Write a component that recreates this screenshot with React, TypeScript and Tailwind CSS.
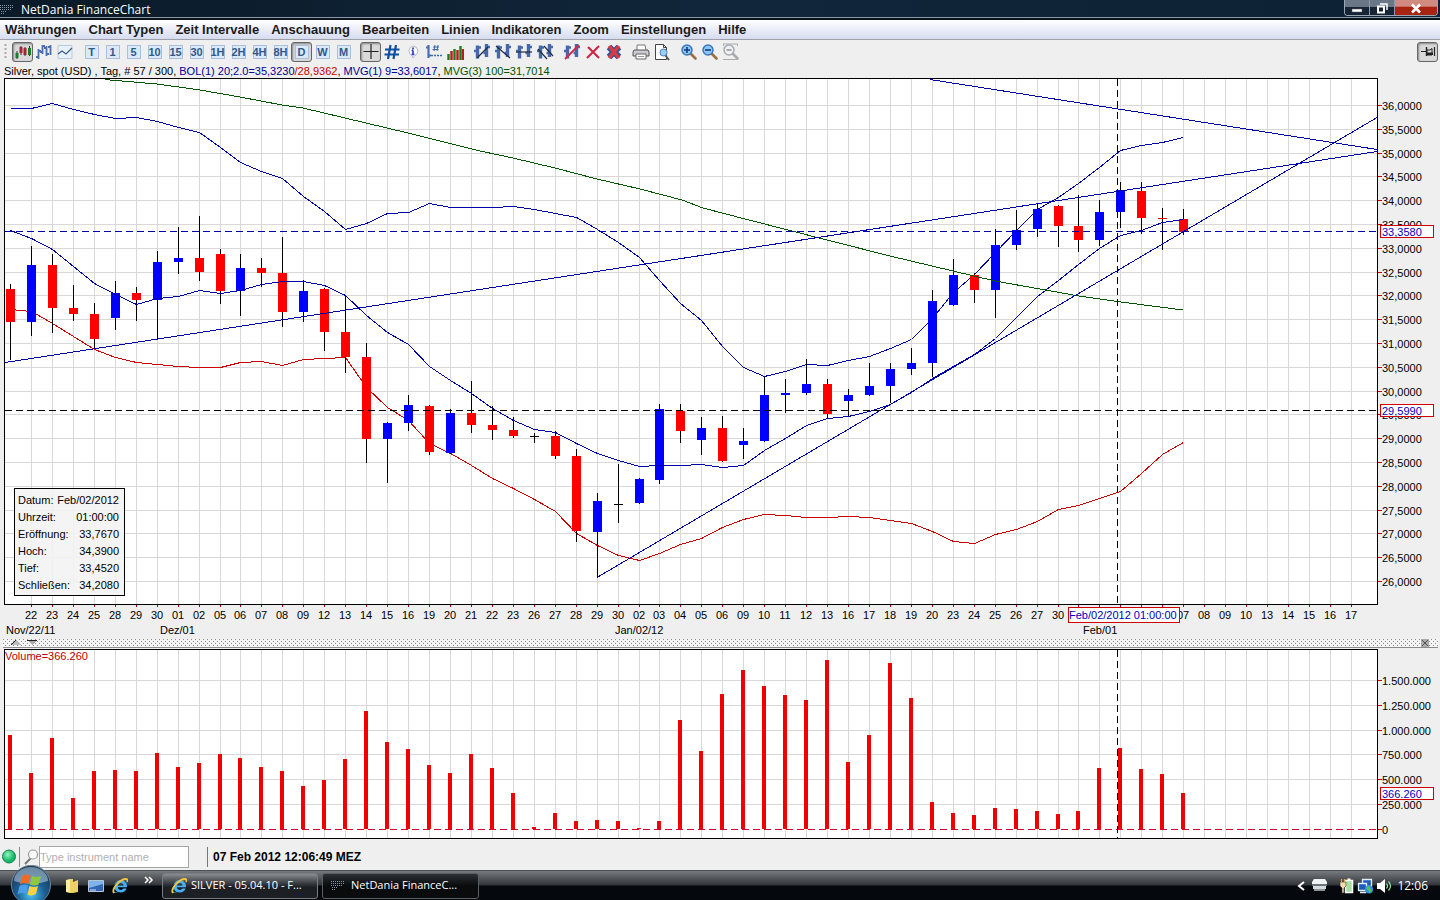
import { useLayoutEffect, useRef, useState, type ReactNode } from "react";
import clsx from "clsx";
import { FaInternetExplorer } from "react-icons/fa";

const menus = [
  "Währungen",
  "Chart Typen",
  "Zeit Intervalle",
  "Anschauung",
  "Bearbeiten",
  "Linien",
  "Indikatoren",
  "Zoom",
  "Einstellungen",
  "Hilfe",
];

const intervals = ["T", "1", "5", "10", "15", "30", "1H", "2H", "4H", "8H", "D", "W", "M"];

const days =
  "22 23 24 25 28 29 30 01 02 05 06 07 08 09 12 13 14 15 16 19 20 21 22 23 26 27 28 29 30 02 03 04 05 06 09 10 11 12 13 16 17 18 19 20 23 24 25 26 27 30 31 01 02 03 06 07 08 09 10 13 14 15 16 17".split(
    " "
  );

const months = [
  { text: "Nov/22/11", x: 6 },
  { text: "Dez/01", x: 160 },
  { text: "Jan/02/12", x: 615 },
  { text: "Feb/01", x: 1083 },
];

// high, body top, body bottom, low, direction
type Candle = [number, number, number, number, "up" | "down" | "flat"];

const candles: Candle[] = [
  [284, 289, 322, 360, "down"],
  [246, 265, 322, 336, "up"],
  [254, 265, 308, 333, "down"],
  [285, 308, 314, 321, "down"],
  [303, 314, 339, 348, "down"],
  [281, 293, 318, 330, "up"],
  [287, 293, 300, 321, "down"],
  [251, 262, 300, 339, "up"],
  [227, 258, 262, 274, "up"],
  [216, 258, 272, 281, "down"],
  [249, 254, 291, 304, "down"],
  [254, 268, 291, 316, "up"],
  [258, 268, 273, 287, "down"],
  [237, 273, 312, 327, "down"],
  [280, 291, 312, 322, "up"],
  [288, 289, 332, 351, "down"],
  [296, 332, 357, 373, "down"],
  [343, 357, 439, 463, "down"],
  [422, 423, 439, 483, "up"],
  [395, 405, 423, 431, "up"],
  [405, 406, 452, 455, "down"],
  [409, 413, 453, 454, "up"],
  [381, 413, 425, 433, "down"],
  [406, 425, 430, 440, "down"],
  [417, 430, 436, 438, "down"],
  [433, 436, 437, 443, "flat"],
  [431, 436, 456, 459, "down"],
  [449, 456, 531, 542, "down"],
  [493, 501, 532, 577, "up"],
  [464, 504, 505, 523, "flat"],
  [478, 479, 503, 504, "up"],
  [404, 409, 480, 484, "up"],
  [404, 411, 431, 443, "down"],
  [417, 428, 440, 455, "up"],
  [416, 428, 461, 462, "down"],
  [428, 441, 445, 459, "up"],
  [377, 395, 441, 442, "up"],
  [379, 393, 395, 413, "up"],
  [359, 384, 393, 395, "up"],
  [379, 384, 414, 419, "down"],
  [389, 395, 401, 416, "up"],
  [363, 386, 395, 396, "up"],
  [363, 369, 386, 403, "up"],
  [348, 363, 369, 375, "up"],
  [290, 301, 363, 377, "up"],
  [259, 275, 305, 306, "up"],
  [273, 275, 290, 303, "down"],
  [229, 245, 290, 318, "up"],
  [210, 230, 245, 250, "up"],
  [203, 209, 229, 237, "up"],
  [205, 206, 226, 247, "down"],
  [195, 226, 240, 252, "down"],
  [200, 212, 240, 246, "up"],
  [182, 190, 212, 228, "up"],
  [182, 191, 218, 234, "down"],
  [208, 218, 219, 250, "down"],
  [209, 219, 232, 235, "down"],
];

const upperBand = [
  108, 108, 103, 109, 114, 118, 117, 121, 127, 132, 147, 162, 171, 178, 196, 211, 229, 223, 213, 212,
  203, 207, 207, 207, 206, 209, 213, 217, 229, 242, 257, 280, 303, 320, 346, 367, 376, 371, 364, 365,
  360, 356, 348, 339, 318, 292, 274, 252, 230, 209, 197, 183, 167, 150, 145, 142, 137,
];

const average = [
  230, 238, 249, 266, 283, 294, 304, 298, 296, 290, 293, 290, 284, 281, 281, 285, 295, 315, 332, 344,
  366, 380, 393, 408, 420, 429, 432, 443, 453, 460, 466, 465, 465, 464, 467, 465, 450, 438, 425, 418,
  416, 411, 404, 392, 378, 366, 354, 338, 317, 296, 280, 264, 248, 235, 230, 222, 219,
];

const lowerBand = [
  309, 311, 323, 336, 349, 357, 362, 364, 366, 367, 367, 362, 361, 365, 359, 358, 357, 387, 407, 420,
  443, 453, 465, 478, 488, 499, 511, 533, 545, 555, 560, 553, 544, 538, 527, 519, 514, 515, 517, 517,
  516, 517, 520, 523, 531, 541, 543, 534, 529, 521, 509, 505, 498, 491, 473, 454, 442,
];

const longAverage = [
  [100, 78], [110, 80], [157, 84], [200, 90], [240, 97], [282, 105], [303, 108], [345, 118], [408, 133],
  [480, 151], [513, 158], [555, 168], [597, 179], [640, 189], [682, 200], [703, 208], [745, 219],
  [788, 230], [827, 240], [890, 256], [953, 271], [995, 281], [1040, 289], [1079, 296], [1121, 302],
  [1183, 310],
];

const trendLines = [
  [5, 362, 1377, 151],
  [930, 79, 1377, 149],
  [597, 577, 1377, 117],
];

const volumes = [
  735, 773, 738, 798, 771, 770, 771, 753, 767, 763, 754, 758, 767, 771, 786, 780, 759, 711, 742, 749,
  765, 773, 754, 768, 793, 827, 813, 821, 820, 821, 828, 821, 720, 751, 694, 670, 686, 695, 700, 660,
  762, 735, 663, 698, 802, 813, 815, 808, 809, 811, 814, 811, 768, 748, 769, 774, 793,
];

const volumeLabels = ["1.500.000", "1.250.000", "1.000.000", "750.000", "500.000", "250.000", "0"];

const quote = [
  ["Datum:", "Feb/02/2012"],
  ["Uhrzeit:", "01:00:00"],
  ["Eröffnung:", "33,7670"],
  ["Hoch:", "34,3900"],
  ["Tief:", "33,4520"],
  ["Schließen:", "34,2080"],
];

const bodyColor = { up: "#0000ff", down: "#ff0000", flat: "#000000" };

function useSize(width: number, height: number) {
  const ref = useRef<HTMLDivElement>(null);
  const [size, setSize] = useState({ width, height });
  useLayoutEffect(() => {
    const el = ref.current;
    if (!el) return;
    const update = () => setSize({ width: el.clientWidth, height: el.clientHeight });
    update();
    const observer = new ResizeObserver(update);
    observer.observe(el);
    return () => observer.disconnect();
  }, []);
  return { ref, ...size };
}

const makeX = (width: number) => (x: number) => Math.round(4 + ((x - 4) * (width - 67)) / 1373);
const column = (i: number) => 10 + i * 20.95;

// 1px dashed rule built from 7px runs with 4px gaps
function dashes(from: number, to: number, at: number, vertical = false) {
  let d = "";
  for (let p = from; p < to; p += 11) {
    const run = Math.min(7, to - p);
    d += vertical ? `M${at} ${p}h1v${run}h-1z` : `M${p} ${at}h${run}v1h-${run}z`;
  }
  return d;
}

function ValueTag({ x, y, width, text }: { x: number; y: number; width: number; text: string }) {
  return (
    <g>
      <rect x={x + 0.5} y={y - 6.5} width={width} height={12} fill="#fff" stroke="#d00000" />
      <text x={x + 2} y={y + 4} fill="#0000c0">
        {text}
      </text>
    </g>
  );
}

function PriceChart() {
  const { ref, width, height } = useSize(1440, 560);
  const px = makeX(width);
  const bottom = height - 34;
  const py = (y: number) => Math.round(((y - 78) * bottom) / 526);
  const right = px(1377);
  const tagX = px(1068);
  // dates fully behind the cursor tag are left out
  const hidden = (x: number) => x > tagX + 6 && x < tagX + 106;
  const band = (values: number[]) => values.map((v, i) => `${px(column(i)) + 0.5},${py(v) + 0.5}`).join(" ");

  return (
    <div ref={ref} className="relative min-h-0 flex-1 overflow-hidden">
      <svg
        width={width}
        height={height}
        className="absolute inset-0 font-['Liberation_Sans',Arial,sans-serif] text-[11px]"
        shapeRendering="crispEdges"
        fill="none"
        role="img"
        aria-label="Silver, spot (USD)"
      >
        <clipPath id="plot">
          <rect x="5" y="1" width={Math.max(0, right - 5)} height={Math.max(0, bottom - 1)} />
        </clipPath>
        <rect x="4.5" y="0.5" width={Math.max(0, right - 4)} height={Math.max(0, bottom)} fill="#fff" stroke="#000" />
        <g clipPath="url(#plot)">
          {days.map((_, i) => (
            <rect key={i} x={px(column(i + 1))} y="0" width="1" height={bottom} fill="#d8d8d8" />
          ))}
          {Array.from({ length: 21 }, (_, i) => (
            <rect key={i} x="5" y={py(105 + i * 23.8)} width={right} height="1" fill="#d8d8d8" />
          ))}
          <polyline points={band(upperBand)} stroke="#0000a8" />
          <polyline points={band(lowerBand)} stroke="#cc0000" />
          {candles.map(([high, top, base, low, dir], i) => {
            const x = px(column(i));
            return (
              <g key={i} fill={bodyColor[dir]}>
                <rect x={x} y={py(high)} width="1" height={py(low) - py(high)} fill="#000" />
                <rect x={x - 4} y={py(top)} width="9" height={Math.max(1, py(base) - py(top))} />
              </g>
            );
          })}
          <polyline points={band(average)} stroke="#0000a8" />
          <polyline points={longAverage.map(([x, y]) => `${px(x)},${py(y)}`).join(" ")} stroke="#005500" />
          {trendLines.map(([x1, y1, x2, y2]) => (
            <line key={y1} x1={px(x1)} y1={py(y1) + 0.5} x2={px(x2)} y2={py(y2) + 0.5} stroke="#0000a8" />
          ))}
          <path d={dashes(5, right, py(231))} fill="#0000a8" />
          <path d={dashes(5, right, py(410))} fill="#000" />
          <path d={dashes(1, bottom, px(1117), true)} fill="#000" />
        </g>
        {Array.from({ length: 21 }, (_, i) => (
          <g key={i}>
            <rect x={right + 1} y={py(105 + i * 23.8)} width="4" height="1" fill="#c00000" />
            <text x={right + 5} y={py(105 + i * 23.8) + 5} fill="#000">
              {(36 - i / 2).toFixed(4).replace(".", ",")}
            </text>
          </g>
        ))}
        {days.map((day, i) => (
          <g key={i}>
            <rect x={px(column(i + 1))} y={bottom + 1} width="1" height="2" fill="#a00020" />
            {!hidden(px(column(i + 1))) && (
              <text x={px(column(i + 1))} y={bottom + 15} fill="#000" textAnchor="middle">
                {day}
              </text>
            )}
          </g>
        ))}
        {months.map((m) => (
          <text key={m.text} x={px(m.x)} y={bottom + 30} fill="#000">
            {m.text}
          </text>
        ))}
        <ValueTag x={right + 3} y={py(232)} width={53} text="33,3580" />
        <ValueTag x={right + 3} y={py(411)} width={53} text="29,5990" />
        <rect x={tagX + 0.5} y={bottom + 3.5} width="111" height="15" fill="#fff" stroke="#d00000" />
        <text x={tagX + 1} y={bottom + 15} fill="#0000c0">
          Feb/02/2012 01:00:00
        </text>
      </svg>
      <dl className="absolute bottom-[42px] left-[14px] w-[111px] border border-black bg-[#f3f3f3]/90 pt-[3px] pr-[5px] pb-px pl-[3px] text-[11px] leading-[17px]">
        {quote.map(([label, value]) => (
          <div key={label} className="flex justify-between">
            <dt>{label}</dt>
            <dd>{value}</dd>
          </div>
        ))}
      </dl>
    </div>
  );
}

function VolumeChart() {
  const { ref, width, height } = useSize(1440, 191);
  const px = makeX(width);
  const py = (y: number) => Math.round(y - 649);
  const right = px(1377);
  return (
    <div ref={ref} className="relative h-[191px] shrink-0 overflow-hidden">
      <svg
        width={width}
        height={height}
        className="absolute inset-0 font-['Liberation_Sans',Arial,sans-serif] text-[11px]"
        shapeRendering="crispEdges"
        role="img"
        aria-label="Volume"
      >
        <rect x="4.5" y="0.5" width={Math.max(0, right - 4)} height="189" fill="#fff" stroke="#000" />
        {days.map((_, i) => (
          <rect key={i} x={px(column(i + 1))} y="1" width="1" height="188" fill="#d8d8d8" />
        ))}
        {volumeLabels.map((label, i) => (
          <g key={label}>
            {i < 6 && <rect x="5" y={py(680 + i * 24.8)} width={Math.max(0, right - 5)} height="1" fill="#d8d8d8" />}
            <rect x={right + 1} y={py(680 + i * 24.8)} width="4" height="1" fill="#c00000" />
            <text x={right + 5} y={py(680 + i * 24.8) + 5}>
              {label}
            </text>
          </g>
        ))}
        {volumes.map((v, i) => (
          <rect key={i} x={px(column(i)) - 2} y={py(v)} width="4" height={829 - v} fill="#f00000" />
        ))}
        <path d={dashes(5, right, 180)} fill="#d00030" />
        <path d={dashes(1, 189, px(1117), true)} fill="#000" />
        <text x="5" y="11" fill="#c00000">
          Volume=366.260
        </text>
        <ValueTag x={right + 3} y={py(794)} width={53} text="366.260" />
      </svg>
    </div>
  );
}

function Tool({ label, pressed, children }: { label: string; pressed?: boolean; children: ReactNode }) {
  return (
    <button
      type="button"
      aria-label={label}
      aria-pressed={pressed}
      className={clsx(
        "flex h-5 w-[21px] items-center justify-center rounded-[3px]",
        pressed && "border border-[#666] bg-[#d9d9d9] shadow-[inset_1px_1px_2px_#888]"
      )}
    >
      {children}
    </button>
  );
}

function Icon({ children }: { children: ReactNode }) {
  return (
    <svg width="18" height="18" viewBox="0 0 18 18" fill="none" className="shrink-0">
      {children}
    </svg>
  );
}

// vertical bars shared by the line drawing tools
const Bars = () => (
  <g stroke="#4668ab">
    <path d="M4.5 2.5v13M13.5 1v13" strokeWidth="3.4" />
    <path d="M1 8h3M5 4.500h3M10.500 10h3M14 4h3" strokeWidth="2.4" />
  </g>
);

const lineTools = [
  { label: "Trendlinie", d: "M4 15L15 4" },
  { label: "Strahl", d: "M2 3l14 12" },
  { label: "Horizontale Linie", d: "M1 9h16" },
  { label: "Kanal", d: "M2 6l9 10M8 3l9 10" },
];

function Magnifier({ sign, muted }: { sign: string; muted?: boolean }) {
  return (
    <Icon>
      <path d="M10.5 10.5l5 5" stroke={muted ? "#aaa" : "#9a7040"} strokeWidth="2.6" strokeLinecap="round" />
      <circle
        cx="7"
        cy="7"
        r="5"
        fill={muted ? "#eef0f4" : "#8ec5f5"}
        stroke={muted ? "#a5a9b2" : "#3a78bd"}
        strokeWidth="1.5"
      />
      <path d={sign} stroke={muted ? "#999" : "#123d80"} strokeWidth="1.6" />
      {muted && <path d="M1 1h15M1 16.500h15M1.500 1v2M15.500 1v2" stroke="#aaa" />}
    </Icon>
  );
}

function Toolbar() {
  return (
    <div className="flex h-[25px] shrink-0 items-center gap-[6px] bg-[#efefef] pr-[2px] pb-px pl-1">
      <div className="flex items-center">
        <svg width="8" height="18" className="shrink-0">
          <path d="M1.5 1v16" stroke="#aaa" strokeWidth="2" strokeDasharray="2 2" />
        </svg>
        <Tool label="Kerzen" pressed>
          <Icon>
            <path d="M3 8v8M7 3v9M11 4v9M15.5 3v10" stroke="#333" />
            <path d="M3 10v5" stroke="#1b7d2b" strokeWidth="3" />
            <path d="M7 4v6M11 5v7" stroke="#a32638" strokeWidth="3" />
            <path d="M15.5 5v7" stroke="#1b7d2b" strokeWidth="3" />
          </Icon>
        </Tool>
        <Tool label="Balken">
          <Icon>
            <path
              d="M3.5 6v10M1 14h3M4 8h2M7.5 2v9M5 9h3M8 3h2M11.5 3v10M9 5h3M12 11h2M15.5 2v10M13 4h3"
              stroke="#4a6fae"
              strokeWidth="1.8"
            />
          </Icon>
        </Tool>
        <Tool label="Linie">
          <Icon>
            <path d="M2 2.5h14v13H2z" fill="#e8f1fa" stroke="#b4cbe3" />
            <path d="M2 11l4-3 4 3 6-6" stroke="#3c5f86" strokeWidth="1.2" />
          </Icon>
        </Tool>
      </div>
      <div className="flex items-center">
        {intervals.map((text) => (
          <Tool key={text} label={text} pressed={text === "D"}>
            <span className="flex h-[14px] w-[14px] items-center justify-center border border-[#a7c0df] bg-[#dbe8f6] text-[11px] leading-none font-bold text-[#31588c]">
              {text}
            </span>
          </Tool>
        ))}
      </div>
      <div className="flex items-center">
        <Tool label="Fadenkreuz" pressed>
          <Icon>
            <path d="M9 1v15M1.5 8.5h15" stroke="#222" strokeWidth="1.2" />
          </Icon>
        </Tool>
        <Tool label="Raster">
          <Icon>
            <path d="M7.5 2L5 16M13 2l-2.5 14M2 6.500h14.500M1.500 11.500H16" stroke="#0c4f9e" strokeWidth="2.2" />
          </Icon>
        </Tool>
        <Tool label="Info">
          <Icon>
            <path d="M9 3a5 5 0 0 1 2 9.500L9 15l-1-2.500A5 5 0 0 1 9 3z" fill="#fff" stroke="#b4b8cc" />
            <path d="M9 4.500v2M9 7.500v4M7.500 11.500h3M7.500 7.500h1.500" stroke="#3340c0" strokeWidth="1.700" />
          </Icon>
        </Tool>
        <Tool label="Werte">
          <Icon>
            <path d="M3.500 2v13M1 4.500h3M3.500 12.500H6" stroke="#4a6fae" strokeWidth="2.200" />
            <path d="M10 2l-1 6M13 2l-1 6M8 4h6M7.500 6.500h6" stroke="#3c68aa" />
            <path d="M6 12.500h11" stroke="#3c68aa" strokeWidth="1.500" strokeDasharray="2 1" />
          </Icon>
        </Tool>
        <Tool label="Volumen">
          <Icon>
            <path d="M2.500 17v-6M8.500 17V6M14.500 17V3" stroke="#148020" strokeWidth="2.400" />
            <path d="M5.500 17V8M11.500 17V7M17 17V6" stroke="#b81c1c" strokeWidth="2.400" />
          </Icon>
        </Tool>
      </div>
      <div className="flex items-center">
        {lineTools.map((tool) => (
          <Tool key={tool.label} label={tool.label}>
            <Icon>
              <Bars />
              <path d={tool.d} stroke="#222d44" strokeWidth="1.200" />
            </Icon>
          </Tool>
        ))}
      </div>
      <div className="flex items-center">
        <Tool label="Linie entfernen">
          <Icon>
            <Bars />
            <path d="M2 16L16 2" stroke="#d0294a" strokeWidth="1.800" />
          </Icon>
        </Tool>
        <Tool label="Löschen">
          <Icon>
            <path d="M4 4l11 11M15 3L3 15" stroke="#d32040" strokeWidth="2" />
          </Icon>
        </Tool>
        <Tool label="Alle löschen">
          <Icon>
            <path d="M4 4l10 10M14 4L4 14" stroke="#35548f" strokeWidth="6.500" />
            <path d="M4 3l10 12M14 3L4 15" stroke="#d93a45" strokeWidth="3.500" />
          </Icon>
        </Tool>
      </div>
      <div className="flex items-center">
        <Tool label="Drucken">
          <Icon>
            <path d="M5 7V2h8l1 5" fill="#fff" stroke="#777" />
            <path d="M2 7h14l1 2v4H1V9z" fill="#c8ccd0" stroke="#555" />
            <path d="M4 11h10v5H4z" fill="#fff" stroke="#666" />
            <path d="M6 13.500h6" stroke="#999" />
          </Icon>
        </Tool>
        <Tool label="Seitenansicht">
          <Icon>
            <path d="M2.500 1.500h8l3 3v12h-11z" fill="#fff" stroke="#444" />
            <path d="M10.500 1.500v3h3" stroke="#444" />
            <path d="M12 12l4 5" stroke="#555" strokeWidth="2" />
            <circle cx="10.500" cy="9.500" r="3.500" fill="#9dcdf2" stroke="#4981bd" />
          </Icon>
        </Tool>
      </div>
      <div className="flex flex-1 items-center">
        <Tool label="Vergrößern">
          <Magnifier sign="M4 7h6M7 4v6" />
        </Tool>
        <Tool label="Verkleinern">
          <Magnifier sign="M4 7h6" />
        </Tool>
        <Tool label="Zoom zurücksetzen">
          <Magnifier sign="M4.500 7h5" muted />
        </Tool>
      </div>
      <Tool label="Anheften" pressed>
        <Icon>
          <path d="M2 8.500h5M15.500 4v9" stroke="#222" strokeWidth="1.200" />
          <path d="M7.500 4v9" stroke="#222" strokeWidth="1.400" />
          <path d="M8 7h3l2-1.500V12H8z" fill="#ddd" stroke="#222" />
          <path d="M8 9.500h6V12H8z" fill="#222" />
        </Icon>
      </Tool>
    </div>
  );
}

function DotLogo() {
  const rows = [7, 7, 6, 3, 2];
  return (
    <svg width="16" height="12" className="shrink-0">
      {rows.map((n, row) =>
        Array.from({ length: n }, (_, i) => (
          <rect key={`${row}-${i}`} x={i * 2 + (row > 2 ? 1 : 0)} y={row * 2 + 1} width="1" height="1" fill="#8796a4" />
        ))
      )}
    </svg>
  );
}

function TitleBar() {
  return (
    <header className="flex h-5 shrink-0 items-start justify-between border-b-2 border-[#0a121c] bg-linear-to-r from-[#0a1a28] via-[#11263a] to-[#0d2134] font-['Open_Sans','Noto_Sans',sans-serif] shadow-[inset_0_-1px_0_#8a98a6]">
      <div className="flex items-center gap-[5px]">
        <DotLogo />
        <h1 className="text-[12px] leading-[19px] text-white">NetDania FinanceChart</h1>
      </div>
      <div className="mr-[2px] flex h-4 overflow-hidden rounded-b-[4px] border border-t-0 border-[#9ba5b0]">
        <button
          type="button"
          aria-label="Minimieren"
          className="flex w-[25px] items-center justify-center border-r border-[#8c98a5] bg-linear-to-b from-[#6a7786] from-45% to-[#152536] to-50%"
        >
          <svg width="12" height="12">
            <path d="M1 7h10v3H1z" fill="#fff" stroke="#555" strokeWidth=".5" />
          </svg>
        </button>
        <button
          type="button"
          aria-label="Wiederherstellen"
          className="flex w-[25px] items-center justify-center border-r border-[#8c98a5] bg-linear-to-b from-[#6a7786] from-45% to-[#152536] to-50%"
        >
          <svg width="12" height="12" fill="none">
            <path d="M4 2h7v6" stroke="#fff" strokeWidth="1.500" />
            <path d="M2 4.500h6v6H2z" stroke="#fff" strokeWidth="2" />
          </svg>
        </button>
        <button
          type="button"
          aria-label="Schließen"
          className="flex w-[42px] items-center justify-center bg-linear-to-b from-[#d08a80] from-40% to-[#a82412] to-50%"
        >
          <svg width="12" height="12">
            <path d="M2 2.500l8 8M10 2.500l-8 8" stroke="#fff" strokeWidth="2.600" />
          </svg>
        </button>
      </div>
    </header>
  );
}

function Splitter() {
  return (
    <div className="flex h-[11px] shrink-0 pr-[2px] pl-[3px]">
      <svg width="100%" height="10" className="border-b border-[#8a8a8a]" shapeRendering="crispEdges">
        <pattern id="dots" width="4" height="4" patternUnits="userSpaceOnUse">
          <rect width="4" height="4" fill="#f4f4f4" />
          <rect x="0" y="1" width="1" height="1" fill="#8c8c8c" />
          <rect x="2" y="3" width="1" height="1" fill="#8c8c8c" />
        </pattern>
        <rect y="1" width="100%" height="8" fill="url(#dots)" />
        <path d="M8 7l5-5 5 5z" fill="#bbb" />
        <path d="M8 7l5-5" stroke="#222" />
        <path d="M24 2h10l-5 5z" fill="#aaa" />
        <path d="M24 2h10" stroke="#222" />
        <svg x="100%" overflow="visible">
          <path d="M-17 1h8v8h-8z" fill="#aaa" />
          <path d="M-16 2l6 6M-10 2l-6 6" stroke="#555" strokeWidth="1.200" />
        </svg>
      </svg>
    </div>
  );
}

function StatusBar() {
  return (
    <div className="flex h-[30px] shrink-0 items-center bg-[#efefef] pt-[3px] pl-[2px]">
      <svg width="15" height="15">
        <defs>
          <radialGradient id="led" cx="40%" cy="35%">
            <stop offset="0" stopColor="#8ff5bd" />
            <stop offset="1" stopColor="#12b766" />
          </radialGradient>
        </defs>
        <circle cx="7" cy="7.500" r="6.500" fill="url(#led)" stroke="#16844d" />
      </svg>
      <div className="mx-[2px] h-5 w-px bg-[#8a8a8a]" />
      <label htmlFor="instrument" className="ml-[2px]" aria-label="Instrument">
        <svg width="15" height="18" fill="none">
          <path d="M7 10l-6 6" stroke="#777" strokeWidth="2" />
          <circle cx="9" cy="6.500" r="4.500" fill="#fafafa" stroke="#999" strokeWidth="1.200" />
          <path d="M1 17.500h13" stroke="#ccc" />
        </svg>
      </label>
      <input
        id="instrument"
        type="text"
        placeholder="Type instrument name"
        className="h-[22px] w-[150px] border border-[#a5a5a5] bg-white text-[11px] placeholder:text-[#b0b0b0]"
      />
      <div className="mr-[5px] ml-[18px] h-5 w-px bg-[#777]" />
      <time className="text-[12px] font-bold text-black">07 Feb 2012 12:06:49 MEZ</time>
    </div>
  );
}

function InternetIcon() {
  return (
    <span className="relative flex h-4 w-4 shrink-0 items-center justify-center">
      <FaInternetExplorer className="h-[14px] w-[14px] text-[#45b0f5]" />
      <svg width="16" height="16" className="absolute inset-0" fill="none">
        <path d="M2 15C-1 11 8 1 14 1c1.500 0 2 1 1.500 3" stroke="#f5c53a" strokeWidth="1.800" />
      </svg>
    </span>
  );
}

function Taskbar() {
  return (
    <footer className="relative flex h-[30px] shrink-0 items-center border-t border-[#4c5054] bg-linear-to-b from-[#777b7e] via-[#33373b] via-48% to-[#05080c] to-52% font-['Open_Sans','Noto_Sans',sans-serif] text-white">
      <button type="button" aria-label="Start" className="absolute -top-[6px] left-[10px]">
        <svg width="42" height="36" viewBox="0 0 42 36">
          <defs>
            <radialGradient id="orb" cx="50%" cy="75%" r="70%">
              <stop offset="0" stopColor="#4cc3f0" />
              <stop offset=".5" stopColor="#1c5f94" />
              <stop offset="1" stopColor="#16334f" />
            </radialGradient>
          </defs>
          <circle cx="21" cy="20" r="19.500" fill="url(#orb)" stroke="#6b8499" />
          <path d="M4 16a17 14 0 0 1 34 0q-17 6-34 0z" fill="#b9d3e4" opacity=".55" />
          <path d="M12 11q4-2.500 8.500-.5L18.500 19q-4-2-8.500.5z" fill="#ee6a2c" />
          <path d="M22 11q4 2 9 0l-2.500 8.500q-4 2-8.500 0z" fill="#8fc83c" />
          <path d="M9.500 21q4-2.500 8.500-.5L16 29q-4-2-8.500.5z" fill="#4b9de8" />
          <path d="M19.500 21q4.500 2 8.500 0L26 29q-4 2.500-8.500.5z" fill="#fcd043" />
        </svg>
      </button>
      <div className="ml-[64px] flex items-center gap-2">
        <button type="button" aria-label="Ordner">
          <svg width="16" height="16">
            <path d="M2 2l4-1v14l-4-1z" fill="#fbeaa2" />
            <path d="M6 1h3v14H6zM9 4l5-2v12l-5 1z" fill="#ecd068" />
          </svg>
        </button>
        <button type="button" aria-label="Desktop">
          <svg width="16" height="16">
            <path d="M.500 2.500h15v11H.500z" fill="#3266b5" stroke="#b6c6d6" />
            <path d="M1 3h14v3L1 10z" fill="#7db2ea" />
            <path d="M2 12h6" stroke="#d8e4ee" />
          </svg>
        </button>
        <button type="button" aria-label="Internet Explorer">
          <InternetIcon />
        </button>
      </div>
      <button type="button" aria-label="Weitere" className="mb-3 ml-4">
        <svg width="10" height="8" fill="none" stroke="#fff" strokeWidth="1.500">
          <path d="M1 1l3 3-3 3M5 1l3 3-3 3" />
        </svg>
      </button>
      <button
        type="button"
        className="ml-2 flex h-[26px] w-[156px] items-center gap-1 rounded-[3px] border border-[#787d82] bg-linear-to-b from-[#8b8e91] to-[#1c2024] to-55% px-2 text-[11px]"
      >
        <InternetIcon />
        SILVER - 05.04.10 - F...
      </button>
      <button
        type="button"
        className="ml-1 flex h-[26px] w-[157px] items-center gap-1 rounded-[3px] border border-[#5b5f63] bg-linear-to-b from-[#2e3236] to-[#090b0d] to-50% px-2 text-[11px]"
      >
        <DotLogo />
        NetDania FinanceC...
      </button>
      <div className="mr-3 ml-auto flex items-center">
        <svg width="8" height="10" fill="none" className="mr-[6px]">
          <path d="M7 1L2 5l5 4" stroke="#fff" strokeWidth="2" />
        </svg>
        <svg width="18" height="16" className="mr-[10px]">
          <path d="M3 1h11l2 3v2H1V4z" fill="#f1f4f6" />
          <path d="M1 6h15v2H1z" fill="#6c747c" />
          <path d="M2 8h13v3H2z" fill="#d5dade" />
          <path d="M3 11h11v2H3z" fill="#8a929a" />
        </svg>
        <svg width="16" height="18" className="mr-[2px]">
          <path d="M6.500 3.500h7v12h-7z" fill="#a5e0a0" stroke="#fff" strokeWidth="1.500" />
          <path d="M8.500 1.500h3v2h-3z" fill="#fff" />
          <path d="M1 5h6v4l-2 2v5H3v-5L1 9z" fill="#f0dcb4" stroke="#3a2b18" strokeWidth=".6" />
          <path d="M2.500 2v3M5.500 2v3" stroke="#d8a050" strokeWidth="1.300" />
        </svg>
        <svg width="17" height="18" className="mr-[2px]">
          <path d="M5.500 2.500h9v7h-9z" fill="#1d5bbd" stroke="#e3eefb" strokeWidth="1.300" />
          <path d="M1.500 6.500h8v7h-8zM3 15.500h6" fill="#1d5bbd" stroke="#e3eefb" strokeWidth="1.300" />
          <circle cx="12" cy="12.500" r="4" fill="#2e93e8" />
          <path d="M9 11l3-2 1 3 2 1-2 3-2-3z" fill="#5ac43e" />
        </svg>
        <svg width="18" height="16" fill="none" className="mr-[3px]">
          <path d="M1 5h3l5-4v14l-5-4H1z" fill="#fff" />
          <path d="M10.500 5.500q2 2.500 0 5M12.500 3.500q4 4.500 0 9" stroke="#8fe0a5" strokeWidth="1.200" />
        </svg>
        <time className="text-[12px]">12:06</time>
      </div>
    </footer>
  );
}

export default function App() {
  return (
    <div className="flex h-screen min-h-[600px] flex-col overflow-hidden bg-[#efefef] font-['Liberation_Sans',Arial,sans-serif] text-black">
      <TitleBar />
      <nav className="flex h-5 shrink-0 items-center gap-3 border-b border-[#a0a0a8] bg-linear-to-b from-white to-[#d6dcf0] pl-[5px] text-[13px] font-bold text-[#1b1b1b]">
        {menus.map((menu) => (
          <button key={menu} type="button">
            {menu}
          </button>
        ))}
      </nav>
      <Toolbar />
      <p className="h-[13px] shrink-0 pl-1 text-[11px] leading-[13px] whitespace-pre">
        Silver, spot (USD) , Tag, # 57 / 300, <span className="text-[#000099]">BOL(1) 20;2.0=35,3230</span>
        <span className="text-[#cc0000]">/28,9362</span>, <span className="text-[#000099]">MVG(1) 9=33,6017</span>,{" "}
        <span className="text-[#005500]">MVG(3) 100=31,7014</span>
      </p>
      <PriceChart />
      <Splitter />
      <VolumeChart />
      <StatusBar />
      <Taskbar />
    </div>
  );
}
